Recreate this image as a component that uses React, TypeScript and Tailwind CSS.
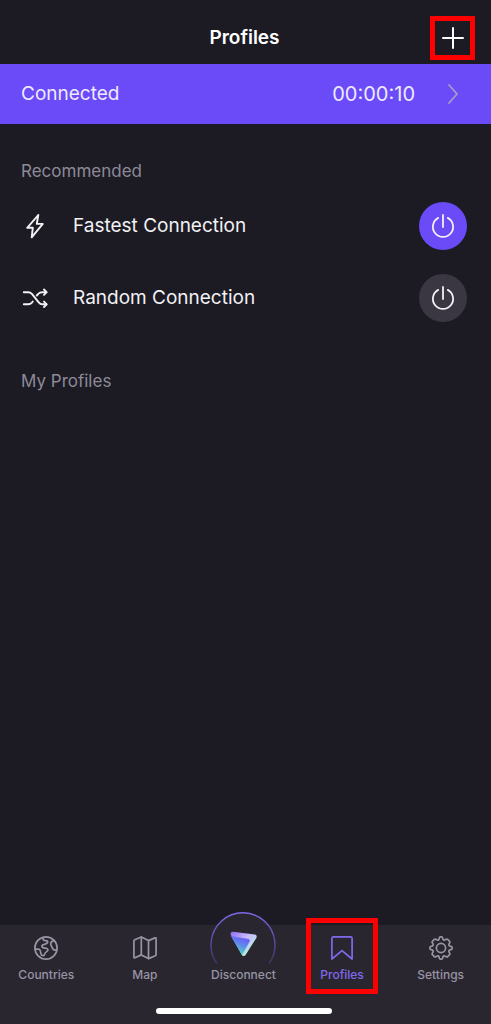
import React from 'react'
import { clsx } from 'clsx'

interface IconProps {
  className?: string
}

function PlusIcon({ className }: IconProps) {
  return (
    <svg viewBox="0 0 24 24" fill="none" stroke="currentColor" strokeWidth="2" strokeLinecap="round" className={className}>
      <path d="M12 2v20M2 12h20" />
    </svg>
  )
}

function ChevronIcon({ className }: IconProps) {
  return (
    <svg viewBox="0 0 12 20" fill="none" stroke="currentColor" strokeWidth="1.8" strokeLinecap="round" strokeLinejoin="round" className={className}>
      <path d="M2 1l8 9-8 9" />
    </svg>
  )
}

function BoltIcon({ className }: IconProps) {
  return (
    <svg viewBox="0 0 28 28" fill="none" stroke="currentColor" strokeWidth="1.9" strokeLinecap="round" strokeLinejoin="round" className={className}>
      <path d="M17.3 3L6.2 15.8h5.6L10.7 25.4 21.8 11.9h-6z" />
    </svg>
  )
}

function ShuffleIcon({ className }: IconProps) {
  return (
    <svg viewBox="0 0 28 28" fill="none" stroke="currentColor" strokeWidth="1.9" strokeLinecap="round" strokeLinejoin="round" className={className}>
      <path d="M2.8 8.2h4.4c1.6 0 2.7.6 3.7 1.7l6.6 8.2c1 1.2 2.2 2.2 3.8 2.2h4.2" />
      <path d="M2.8 20.3h4.4c1.6 0 2.7-.6 3.7-1.7l.9-1.1" />
      <path d="M15.8 11.5l1.5-1.7c1.1-1.1 2.3-1.6 3.9-1.6h4.2" />
      <path d="M23 5.5l2.6 2.7L23 10.9M23 17.6l2.6 2.7L23 23" />
    </svg>
  )
}

function PowerIcon({ className }: IconProps) {
  return (
    <svg viewBox="0 0 24 24" fill="none" stroke="currentColor" strokeWidth="1.8" strokeLinecap="round" className={className}>
      <path d="M12 .9v12.2" />
      <path d="M7.2 3.9a10.1 10.1 0 1 0 9.6 0" />
    </svg>
  )
}

function GlobeIcon({ className }: IconProps) {
  return (
    <svg viewBox="0 0 24 24" fill="none" stroke="currentColor" strokeWidth="1.7" strokeLinecap="round" strokeLinejoin="round" className={className}>
      <circle cx="12" cy="12" r="11.1" />
      <path d="M1.2 13.2h3.2c1.200 0 1.800.8 2 2l.5 2.400c.3 1.300 1 2.100 2.100 2.100 1.300 0 1.700-.9 1.900-2 .1-.9.700-1.300 1.500-1.800 1-.6 1.800-1.300 1.500-2.300-.3-1.100-1.500-1.300-2.600-1.400-1.500-.1-3.400-.4-3.400-1.900 0-1.300 1.200-1.700 2.500-2 1.800-.3 3.300-.6 3.300-2.200 0-1.200-1-1.500-2.300-1.500-1.700 0-2.600-.8-2.600-2.800" />
      <path d="M20.300 4.600c-2 .3-3.600 1.400-3.600 3.300 0 1.700 1.100 2.300 1.600 3.900.4 1.700 1.800 2.700 4.300 2.300" />
    </svg>
  )
}

function MapIcon({ className }: IconProps) {
  return (
    <svg viewBox="0 0 24 24" fill="none" stroke="currentColor" strokeWidth="1.7" strokeLinecap="round" strokeLinejoin="round" className={className}>
      <path d="M.9 4.9c0-.6.3-.9.8-1.100L8.300 1l7.200 3.600 6.400-2.700c.7-.3 1.200 0 1.200.7v16c0 .6-.3.9-.8 1.100l-6.800 2.900-7.200-3.700-6.300 2.800c-.7.3-1.100 0-1.100-.8z" />
      <path d="M8.300 1v17.900M15.500 4.600v18" />
    </svg>
  )
}

function BookmarkIcon({ className }: IconProps) {
  return (
    <svg viewBox="0 0 24 24" fill="none" stroke="currentColor" strokeWidth="1.7" strokeLinejoin="round" className={className}>
      <path d="M1.9 2.400c0-1 .5-1.500 1.500-1.500h17.200c1 0 1.500.5 1.500 1.500v20.600L12 14.600 1.900 23z" />
    </svg>
  )
}

function GearIcon({ className }: IconProps) {
  return (
    <svg viewBox="0 0 24 24" fill="none" stroke="currentColor" strokeWidth="1.7" strokeLinejoin="round" className={className}>
      <circle cx="12" cy="12" r="4.600" />
      <path d="M10.300 1.900q.2-1 1.200-1h1q1 0 1.200 1l.2 1.100q.2.800.9 1.100t1.400-.2l.9-.6q.9-.6 1.600.1l1.900 1.900q.7.700.1 1.600l-.6.9q-.5.700-.2 1.400t1.100.9l1.100.2q1 .2 1 1.200v1q0 1-1 1.200l-1.100.2q-.8.200-1.100.9t.2 1.400l.6.9q.6.900-.1 1.600l-1.900 1.900q-.7.700-1.600.1l-.9-.6q-.7-.5-1.400-.2t-.9 1.100l-.2 1.100q-.2 1-1.200 1h-1q-1 0-1.200-1l-.2-1.100q-.2-.8-.9-1.100t-1.400.2l-.9.6q-.9.600-1.600-.1l-1.900-1.900q-.7-.7-.1-1.600l.6-.9q.5-.7.200-1.400t-1.100-.9l-1.100-.2q-1-.2-1-1.200v-1q0-1 1-1.200l1.100-.2q.8-.2 1.100-.9t-.2-1.400l-.6-.9q-.6-.9.1-1.600l1.900-1.900q.7-.7 1.600-.1l.9.600q.7.500 1.400.2t.9-1.100z" />
    </svg>
  )
}

// Shield mark inside a ring that fades out towards the label
function ConnectMark({ className }: IconProps) {
  return (
    <svg viewBox="0 0 66 66" fill="none" className={className}>
      <defs>
        <linearGradient id="ring" x1="33" y1="0" x2="33" y2="54" gradientUnits="userSpaceOnUse">
          <stop stopColor="#7c69e8" />
          <stop offset="0.5" stopColor="#5d4fa6" />
          <stop offset="1" stopColor="#3a3450" />
        </linearGradient>
        <linearGradient id="outer" x1="21" y1="20" x2="40" y2="42" gradientUnits="userSpaceOnUse">
          <stop stopColor="#8a6cf0" />
          <stop offset="0.5" stopColor="#c9b8fb" />
          <stop offset="1" stopColor="#b4f2e4" />
        </linearGradient>
        <linearGradient id="inner" x1="36" y1="24" x2="28" y2="44" gradientUnits="userSpaceOnUse">
          <stop stopColor="#6d4cf6" />
          <stop offset="0.45" stopColor="#6180ef" />
          <stop offset="1" stopColor="#4fe0bd" />
        </linearGradient>
      </defs>
      <circle cx="33" cy="33" r="32" fill="#292630" />
      <path d="M7 52.5a32 32 0 1 1 52 0" stroke="url(#ring)" strokeWidth="1.5" />
      <path d="M22.8 23L44.500 25.800 33.700 42.800z" fill="url(#outer)" stroke="url(#outer)" strokeWidth="4.4" strokeLinejoin="round" />
      <path d="M21.300 25.400L38.200 28.200c1.300.2 1.800 1.200 1.100 2.300L32.100 43.500z" fill="url(#inner)" stroke="url(#inner)" strokeWidth="0.6" strokeLinejoin="round" />
    </svg>
  )
}

const profiles = [
  { name: 'Fastest Connection', Icon: BoltIcon, active: true },
  { name: 'Random Connection', Icon: ShuffleIcon, active: false }
]

const tabs = [
  { label: 'Countries', Icon: GlobeIcon },
  { label: 'Map', Icon: MapIcon },
  { label: 'Disconnect', Icon: ConnectMark, raised: true },
  { label: 'Profiles', Icon: BookmarkIcon, current: true },
  { label: 'Settings', Icon: GearIcon }
]

export default function App() {
  return (
    <div className="flex min-h-screen flex-col bg-[#1c1b24] font-['Inter',sans-serif] text-white">
      {/* Header */}
      <header className="grid h-16 grid-cols-[1fr_auto_1fr] items-center pt-3 pr-4">
        <h1 className="col-start-2 pl-[14px] text-[19px] leading-6 font-semibold">Profiles</h1>
        <button
          aria-label="Add profile"
          className="flex h-11 w-[45px] items-center justify-center justify-self-end border-5 border-[#fe0000]"
        >
          <PlusIcon className="size-6" />
        </button>
      </header>

      {/* Connection status */}
      <button className="flex h-15 w-full items-center bg-[#6a4bf7] pr-8 pl-[21px] text-[19px] leading-6 text-[#eeeafe]">
        <span className="flex-1 text-left">Connected</span>
        <span className="text-[20px]">00:00:10</span>
        <ChevronIcon className="ml-8 h-5 w-3 text-[#a79cc4]" />
      </button>

      <main className="flex-1 pr-6 pl-[21px]">
        <section>
          <h2 className="pt-[35px] pb-[7px] text-[17px] leading-6 text-[#8d8a98]">Recommended</h2>
          <ul>
            {profiles.map(({ name, Icon, active }) => (
              <li key={name} className="flex h-[72px] items-center text-[#f2f1f4]">
                <Icon className="size-7 shrink-0" />
                <span className="flex-1 pl-6 text-[19px] leading-6">{name}</span>
                <button
                  aria-label={name}
                  aria-pressed={active}
                  className={clsx(
                    'flex size-12 items-center justify-center rounded-full',
                    active ? 'bg-[#6a4bf7]' : 'bg-[#3a3743]'
                  )}
                >
                  <PowerIcon className="size-6" />
                </button>
              </li>
            ))}
          </ul>
        </section>
        <section>
          <h2 className="pt-[35px] text-[17px] leading-6 text-[#8d8a98]">My Profiles</h2>
        </section>
      </main>

      {/* Tab bar */}
      <footer className="bg-[#292630] pb-[10px]">
        <div className="mr-px -ml-[3px]">
          <nav className="grid h-[83px] grid-cols-5">
            {tabs.map(({ label, Icon, raised, current }) => (
              <a
                key={label}
                href="#"
                aria-current={current ? 'page' : undefined}
                className={clsx(
                  'relative flex flex-col items-center pt-[11px] text-[12px] leading-4 font-medium',
                  current ? 'text-[#8069ec]' : 'text-[#9894a3]'
                )}
              >
                <span className="flex h-6 items-center justify-center">
                  <Icon className={raised ? '-mt-2 size-[66px]' : 'size-6'} />
                </span>
                <span className="relative pt-[7px]">{label}</span>
                {current && (
                  <span className="absolute -top-[7px] left-1/2 h-[76px] w-[72px] -translate-x-1/2 border-5 border-[#fe0000]" />
                )}
              </a>
            ))}
          </nav>
          <div className="mx-auto h-[6px] w-44 rounded-full bg-white" />
        </div>
      </footer>
    </div>
  )
}
